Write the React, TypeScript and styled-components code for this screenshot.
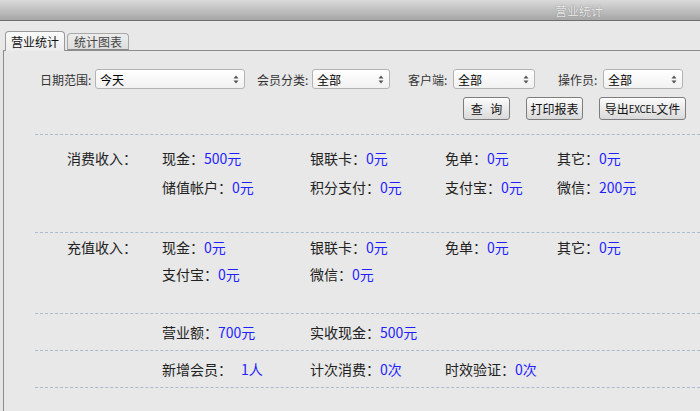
import React from 'react';
import styled, { createGlobalStyle } from 'styled-components';

const GlobalStyle = createGlobalStyle`
    html, body {
        margin: 0;
        padding: 0;
        background: #e6e6e6;
    }
    body {
        font-family: 'Noto Sans CJK SC', 'Noto Sans', sans-serif;
        color: #222;
    }
    #root {
        width: 700px;
        height: 411px;
        overflow: hidden;
        display: flex;
        flex-direction: column;
    }
`;

type Item = { label: string; value: string; gap?: number };
type Block = { title?: string; rows: Item[][]; rowH: number; padTop: number; padBottom: number };

const blocks: Block[] = [
    {
        title: '消费收入：',
        rowH: 29,
        padTop: 8,
        padBottom: 31,
        rows: [
            [
                { label: '现金：', value: '500元' },
                { label: '银联卡：', value: '0元' },
                { label: '免单：', value: '0元' },
                { label: '其它：', value: '0元' },
            ],
            [
                { label: '储值帐户：', value: '0元' },
                { label: '积分支付：', value: '0元' },
                { label: '支付宝：', value: '0元' },
                { label: '微信：', value: '200元' },
            ],
        ],
    },
    {
        title: '充值收入：',
        rowH: 27,
        padTop: 0,
        padBottom: 26,
        rows: [
            [
                { label: '现金：', value: '0元' },
                { label: '银联卡：', value: '0元' },
                { label: '免单：', value: '0元' },
                { label: '其它：', value: '0元' },
            ],
            [
                { label: '支付宝：', value: '0元' },
                { label: '微信：', value: '0元' },
            ],
        ],
    },
    {
        rowH: 36,
        padTop: 0,
        padBottom: 0,
        rows: [
            [
                { label: '营业额：', value: '700元' },
                { label: '实收现金：', value: '500元' },
            ],
        ],
    },
    {
        rowH: 36,
        padTop: 0,
        padBottom: 0,
        rows: [
            [
                { label: '新增会员：', value: '1人', gap: 9 },
                { label: '计次消费：', value: '0次' },
                { label: '时效验证：', value: '0次' },
            ],
        ],
    },
];

const filters = [
    { label: '日期范围:', value: '今天', labelWidth: 55, width: 150, left: 0 },
    { label: '会员分类:', value: '全部', labelWidth: 55, width: 78, left: 12 },
    { label: '客户端:', value: '全部', labelWidth: 45, width: 82, left: 18 },
    { label: '操作员:', value: '全部', labelWidth: 45, width: 80, left: 23 },
];

function SelectArrow() {
    return (
        <svg width='6' height='9' viewBox='0 0 6 9'>
            <path d='M3 0.5 L5.5 3.5 H0.5 Z' fill='#555' />
            <path d='M3 8.5 L5.5 5.5 H0.5 Z' fill='#555' />
        </svg>
    );
}

function App() {
    return (
        <>
            <GlobalStyle />
            <TitleBar>
                <span>营业统计</span>
            </TitleBar>
            <TabBar>
                <Tab $active>营业统计</Tab>
                <Tab>统计图表</Tab>
            </TabBar>
            <Panel>
                <FilterRow>
                    {filters.map((f) => (
                        <FilterGroup key={f.label} $left={f.left}>
                            <FilterLabel $width={f.labelWidth}>{f.label}</FilterLabel>
                            <Select $width={f.width}>
                                <span>{f.value}</span>
                                <SelectArrow />
                            </Select>
                        </FilterGroup>
                    ))}
                </FilterRow>
                <ButtonRow>
                    <ActionButton $width={47} $spacing={5}>查 询</ActionButton>
                    <ActionButton $width={57}>打印报表</ActionButton>
                    <ActionButton $width={87}>
                        导出<Small>EXCEL</Small>文件
                    </ActionButton>
                </ButtonRow>
                <Divider $top={14} />
                {blocks.map((b, i) => (
                    <React.Fragment key={i}>
                        <Section $padTop={b.padTop} $padBottom={b.padBottom}>
                            {b.rows.map((row, r) => (
                                <StatRow key={r} $height={b.rowH}>
                                    <SectionTitle>{r === 0 ? b.title : ''}</SectionTitle>
                                    {row.map((it) => (
                                        <Stat key={it.label}>
                                            {it.label}
                                            <StatValue $gap={it.gap ?? 0}>{it.value}</StatValue>
                                        </Stat>
                                    ))}
                                </StatRow>
                            ))}
                        </Section>
                        <Divider />
                    </React.Fragment>
                ))}
            </Panel>
        </>
    );
}

const TitleBar = styled.div`
    height: 20px;
    flex-shrink: 0;
    display: flex;
    align-items: center;
    justify-content: flex-end;
    padding-right: 97px;
    background: linear-gradient(#dadada, #a6a6a6);
    border-bottom: 1px solid #6e6e6e;

    span {
        font-size: 12px;
        color: #ececec;
        text-shadow: 0 0 1px #666;
    }
`;

const TabBar = styled.div`
    height: 29px;
    flex-shrink: 0;
    display: flex;
    align-items: flex-end;
    gap: 2px;
    padding-left: 5px;
    background: #e8e8e8;
    position: relative;
    z-index: 1;
`;

const Tab = styled.div<{ $active?: boolean }>`
    box-sizing: border-box;
    height: ${(p) => (p.$active ? '20px' : '17px')};
    margin-bottom: ${(p) => (p.$active ? '-1px' : '0')};
    padding: 0 ${(p) => (p.$active ? '5px' : '6px')};
    display: flex;
    align-items: center;
    font-size: 12px;
    color: ${(p) => (p.$active ? '#111' : '#444')};
    background: ${(p) => (p.$active ? 'linear-gradient(#fafafa, #ececec)' : 'linear-gradient(#ececec, #dedede)')};
    border: 1px solid ${(p) => (p.$active ? '#9a9a9a' : '#a8a8a8')};
    border-bottom: ${(p) => (p.$active ? 'none' : '1px solid #8c8c8c')};
    border-radius: 4px 4px 0 0;
`;

const Panel = styled.div`
    flex: 1;
    margin-left: 3px;
    border-top: 1px solid #8c8c8c;
    border-left: 1px solid #8c8c8c;
    background: #e8e8e8;
`;

const FilterRow = styled.div`
    display: flex;
    align-items: center;
    padding: 18px 0 0 36px;
`;

const FilterGroup = styled.div<{ $left: number }>`
    display: flex;
    align-items: center;
    margin-left: ${(p) => p.$left}px;
`;

const FilterLabel = styled.span<{ $width: number }>`
    width: ${(p) => p.$width}px;
    font-size: 12px;
    color: #333;
    white-space: nowrap;
`;

const Select = styled.div<{ $width: number }>`
    box-sizing: border-box;
    width: ${(p) => p.$width}px;
    height: 20px;
    display: flex;
    align-items: center;
    justify-content: space-between;
    padding: 0 5px 0 4px;
    font-size: 12px;
    color: #000;
    background: linear-gradient(#ffffff, #f1f1f1);
    border: 1px solid #b4b4b4;
    border-radius: 3px;
`;

const ButtonRow = styled.div`
    display: flex;
    justify-content: flex-end;
    gap: 16px;
    padding-right: 14px;
    margin-top: 8px;
`;

const ActionButton = styled.button<{ $width: number; $spacing?: number }>`
    box-sizing: border-box;
    width: ${(p) => p.$width}px;
    height: 23px;
    padding: 0;
    font-family: 'Noto Sans CJK SC', sans-serif;
    font-size: 12px;
    word-spacing: ${(p) => p.$spacing ?? 0}px;
    color: #111;
    background: linear-gradient(#fbfbfb, #dadada);
    border: 1px solid #7d7d7d;
    border-radius: 3px;
    box-shadow: inset 0 1px 0 #fff;
    display: flex;
    align-items: center;
    justify-content: center;
    white-space: pre;
`;

const Small = styled.span`
    font-size: 10px;
    letter-spacing: -0.3px;
`;

const Divider = styled.div<{ $top?: number }>`
    margin: ${(p) => p.$top ?? 0}px 0 0 31px;
    border-top: 1px dashed #a9bccf;
`;

const Section = styled.div<{ $padTop: number; $padBottom: number }>`
    margin-left: 31px;
    padding: ${(p) => p.$padTop}px 0 ${(p) => p.$padBottom}px 32px;
`;

const StatRow = styled.div<{ $height: number }>`
    display: grid;
    grid-template-columns: 95px 148px 135px 112px 1fr;
    align-items: center;
    height: ${(p) => p.$height}px;
    font-size: 14px;
    color: #222;
`;

const SectionTitle = styled.span`
    white-space: nowrap;
`;

const Stat = styled.span`
    white-space: nowrap;
`;

const StatValue = styled.span<{ $gap: number }>`
    color: #1f1fff;
    margin-left: ${(p) => p.$gap}px;
`;

export default App;
